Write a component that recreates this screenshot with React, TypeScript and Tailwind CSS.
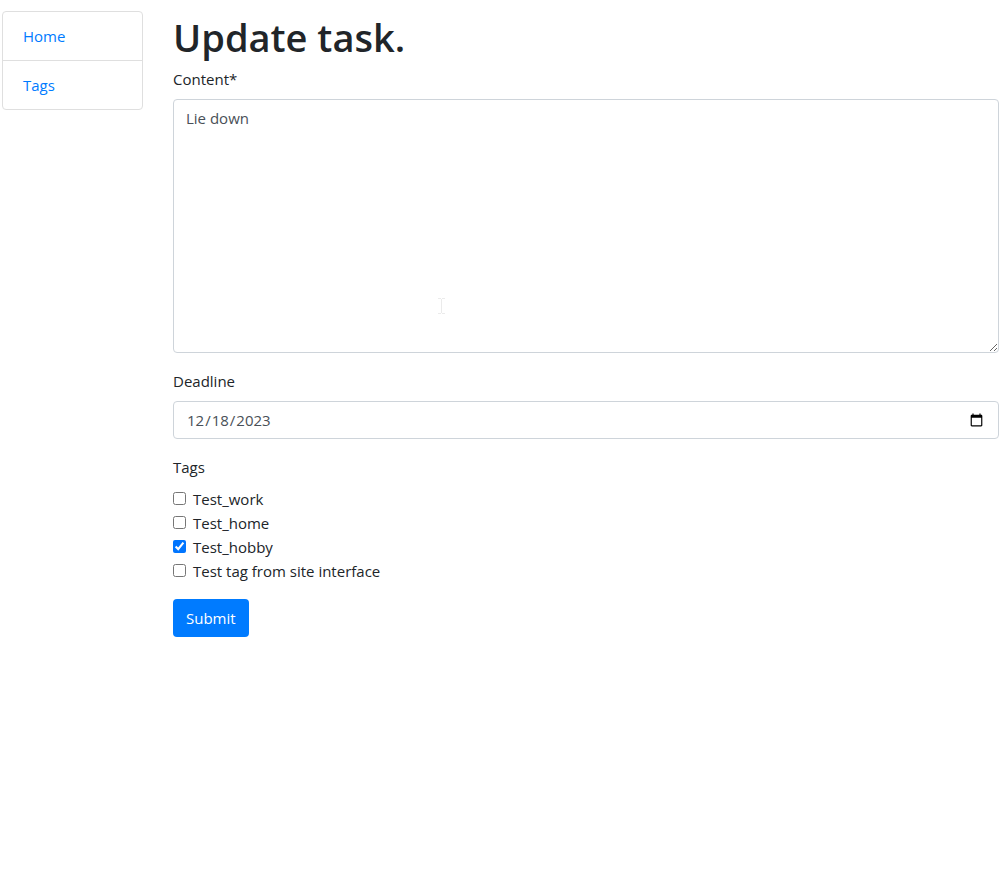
import React from "react";

const tags = [
  { id: "work", label: "Test_work", checked: false },
  { id: "home", label: "Test_home", checked: false },
  { id: "hobby", label: "Test_hobby", checked: true },
  { id: "site", label: "Test tag from site interface", checked: false },
];

export default function App() {
  return (
    <div className="flex items-start gap-[30px] bg-white pt-[11px] pr-[6px] pl-[2px] font-['Open_Sans','Noto_Sans',sans-serif] text-[15px] leading-6 text-[#212529]">
      <nav className="w-[141px] shrink-0 rounded border border-[#dfdfdf]">
        <a href="#home" className="block border-b border-[#dfdfdf] px-5 py-3 text-[#007bff]">Home</a>
        <a href="#tags" className="block px-5 py-3 text-[#007bff]">Tags</a>
      </nav>
      <main className="min-w-0 flex-1">
        <h1 className="mb-1 text-[38px] leading-[52px] font-semibold">Update task.</h1>
        <form onSubmit={(e) => e.preventDefault()}>
          <label htmlFor="content" className="mb-2 block">Content*</label>
          <div className="relative mb-4">
            <textarea
              id="content"
              defaultValue="Lie down"
              className="block h-[254px] w-full rounded border border-[#ced4da] px-3 py-[6px] text-[#495057]"
            />
            <svg
              aria-hidden="true"
              viewBox="0 0 7 16"
              className="pointer-events-none absolute top-[199px] left-[265px] h-4 w-[7px]"
              fill="none"
              stroke="#ebebeb"
            >
              <path d="M0 .5h3M4 .5h3M3.5 1v14M0 15.5h3M4 15.5h3" />
            </svg>
          </div>
          <label htmlFor="deadline" className="mb-2 block">Deadline</label>
          <input
            id="deadline"
            type="date"
            defaultValue="2023-12-18"
            className="mb-4 block h-[38px] w-full rounded border border-[#ced4da] px-3 py-[6px] text-[#495057]"
          />
          <fieldset className="mb-4">
            <legend className="mb-2">Tags</legend>
            {tags.map((t) => (
              <div key={t.id} className="flex items-start gap-[7px]">
                <input id={t.id} type="checkbox" defaultChecked={t.checked} className="mt-[5px] size-[13px]" />
                <label htmlFor={t.id}>{t.label}</label>
              </div>
            ))}
          </fieldset>
          <button type="submit" className="h-[38px] rounded bg-[#007bff] px-[13px] text-white">Submit</button>
        </form>
      </main>
    </div>
  );
}
